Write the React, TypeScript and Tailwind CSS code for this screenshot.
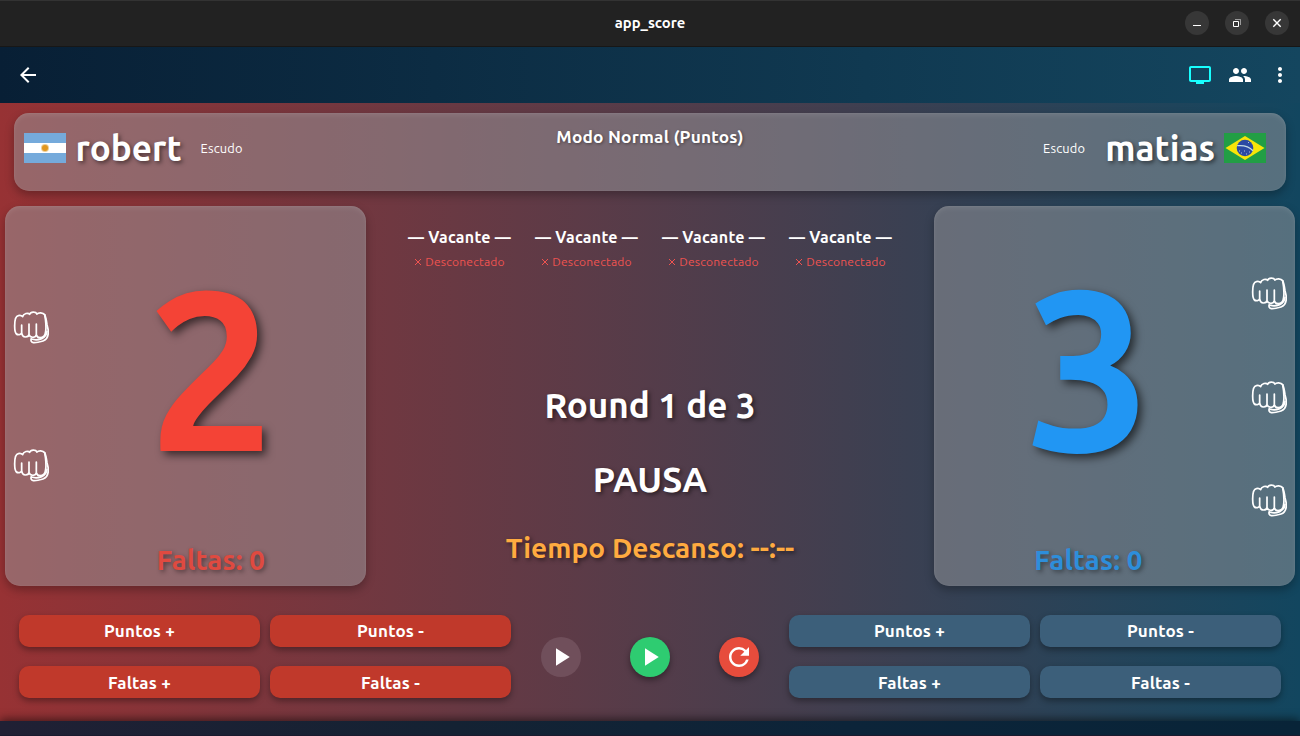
import type { ReactNode } from "react";
import { MdArrowBack, MdMoreVert, MdPeople, MdPlayArrow, MdRefresh, MdTv } from "react-icons/md";

function Fist() {
  return (
    <svg viewBox="36 27 108 108" className="size-9 shrink-0" fill="none" stroke="white" strokeWidth="5.2" strokeLinecap="round" strokeLinejoin="round">
      <path d="M48 103C43 101 41 92 41 78C41 62 44 48 52 47C58 45 62 47 65 50C67 40 82 37 86 43C89 34 104 34 108 42C112 37 126 37 131 44C134 50 136 60 138 74C141 88 143 92 142 98C141 113 136 120 126 123C116 126 104 129 97 128C90 126 89 121 91 117" />
      <path d="M62 75V98M48 103C54 105 60 104 62 98C63 106 67 111 73 111C79 111 84 109 84 103V72M84 103C86 114 104 115 106 104V72M106 104C108 112 112 113 117 113C128 113 133 105 134 94C136 80 134 60 131 44" />
      <path d="M91 117C100 120 112 120 122 116C132 111 137 104 138 94" />
    </svg>
  );
}

function ArgentinaFlag() {
  return (
    <svg viewBox="0 0 42 30" className="h-[30px] w-[42px]">
      <rect width="42" height="30" fill="#75aadb" />
      <rect y="10" width="42" height="10" fill="#fff" />
      <circle cx="21" cy="15" r="4" fill="#e9c27a" opacity=".8" />
      <circle cx="21" cy="15" r="3" fill="#e0961f" />
    </svg>
  );
}

function BrazilFlag() {
  return (
    <svg viewBox="0 0 42 30" className="h-[30px] w-[42px]">
      <rect width="42" height="30" fill="#229e45" />
      <path d="M1.5 15L21 3L40.5 15L21 27Z" fill="#f8e509" />
      <circle cx="21" cy="15" r="8.3" fill="#2b49a3" />
      <path d="M13.2 12.7C19.5 12 25.5 14 29 17.8" fill="none" stroke="#c5dce4" strokeWidth="1.3" />
      <path d="M15 18h1M17 20h1M20 18h1M22 21h1M25 19h1M24 9.5h1" stroke="#aebfe0" strokeWidth="1" />
    </svg>
  );
}

function WindowButton({ children }: { children: ReactNode }) {
  return (
    <div className="flex size-6 items-center justify-center rounded-full bg-[#373737]">
      <svg viewBox="0 0 24 24" className="size-6" fill="none" stroke="white">
        {children}
      </svg>
    </div>
  );
}

const glass =
  "bg-[#99999d]/50 rounded-[15px] shadow-[0_4px_10px_rgba(0,0,0,0.28),inset_0_3px_6px_-2px_rgba(255,255,255,0.12),inset_0_0_2px_rgba(255,255,255,0.1)]";

const bigShadow = "[text-shadow:2px_2px_4px_rgba(0,0,0,0.5)]";

function Seat() {
  return (
    <div className="flex w-[127px] flex-col items-center whitespace-nowrap">
      <p className="h-6 text-base leading-6 font-bold tracking-[0.25px]">— Vacante —</p>
      <p className="mt-[3px] flex h-[20px] items-center text-[12px] tracking-[0.23px] text-[#ef5350]">
        <svg viewBox="0 0 8 8" className="mr-[3px] size-2" stroke="currentColor" strokeWidth="1">
          <path d="M1 1L7 7M7 1L1 7" />
        </svg>
        Desconectado
      </p>
    </div>
  );
}

function ActionButton({ label, blue, low }: { label: string; blue?: boolean; low?: boolean }) {
  return (
    <button
      className={`flex h-8 w-[241px] items-center justify-center rounded-[10px] text-[17px] leading-8 font-bold tracking-[0.2px] shadow-[0_3px_6px_rgba(0,0,0,0.35)] ${
        blue ? "bg-[#3c5f7a]" : "bg-[#c0392b]"
      } ${low ? "pt-[2px]" : ""}`}
    >
      {label}
    </button>
  );
}

function ActionGrid({ blue }: { blue?: boolean }) {
  return (
    <div className="grid grid-cols-[241px_241px] gap-x-[10px] gap-y-[19px]">
      <ActionButton blue={blue} label="Puntos +" />
      <ActionButton blue={blue} label="Puntos -" />
      <ActionButton blue={blue} low label="Faltas +" />
      <ActionButton blue={blue} low label="Faltas -" />
    </div>
  );
}

function ScoreCard({ score, blue, fists }: { score: number; blue?: boolean; fists: number }) {
  return (
    <section className={`flex h-[380px] w-[361px] ${blue ? "flex-row-reverse" : ""} ${glass}`}>
      <div className={`flex shrink-0 flex-col items-center justify-evenly ${blue ? "w-[52px] pt-px" : "w-[51px]"}`}>
        {Array.from({ length: fists }, (_, i) => (
          <Fist key={i} />
        ))}
      </div>
      <div className={`flex flex-col items-center ${blue ? "w-[309px] text-[#2196f3]" : "w-[310px] text-[#f44336]"}`}>
        <p className="mt-[48px] h-[226px] text-[226px] leading-[226px] font-bold [text-shadow:4px_4px_8px_rgba(0,0,0,0.6)]">{score}</p>
        <p className={`mt-[60px] text-[27.6px] leading-10 font-bold tracking-[0.2px] opacity-80 ${bigShadow}`}>Faltas: 0</p>
      </div>
    </section>
  );
}

export default function App() {
  return (
    <div className="flex h-[736px] w-[1300px] flex-col overflow-hidden bg-[linear-gradient(90deg,#973234,#12465f)] font-['Ubuntu','Noto_Sans',sans-serif] text-white">
      <header className="grid h-[47px] shrink-0 grid-cols-[1fr_auto_1fr] items-center border-t border-b border-t-[#333] border-b-[#171717] bg-[#222] px-[11px] pb-px">
        <span />
        <h1 className="text-[14.8px] leading-5 font-bold">app_score</h1>
        <div className="flex justify-end gap-4">
          <WindowButton>
            <path d="M8 14.5H16" />
          </WindowButton>
          <WindowButton>
            <path d="M8.5 10.5H13.5V15.5H8.5Z" />
            <path d="M10 8.5H15.5V14" opacity=".5" />
          </WindowButton>
          <WindowButton>
            <path d="M8.3 8.3L15.7 15.7M15.7 8.3L8.3 15.7" strokeWidth="1.4" />
          </WindowButton>
        </div>
      </header>

      <nav className="flex h-14 shrink-0 items-center justify-between bg-[linear-gradient(90deg,#081f35,#14465f)] pr-2 pl-4">
        <MdArrowBack size={24} />
        <div className="flex items-center gap-4">
          <MdTv size={24} className="text-[#18ffff]" />
          <MdPeople size={24} />
          <MdMoreVert size={24} />
        </div>
      </nav>

      <main className="flex h-[618px] shrink-0 flex-col">
        <section className={`mx-[14px] mt-[10px] grid h-[78px] shrink-0 grid-cols-[1fr_auto_1fr] pt-[15px] pr-5 pl-[10px] ${glass}`}>
          <div className="flex h-10 items-center">
            <ArgentinaFlag />
            <span className={`ml-[9.5px] text-[35.1px] leading-10 font-bold ${bigShadow}`}>robert</span>
            <span className="ml-[19px] pt-[2px] text-[12.8px] tracking-[0.2px]">Escudo</span>
          </div>
          <h2 className="mt-[-3px] pl-[10px] text-[17.3px] leading-6 font-bold tracking-[0.2px] [text-shadow:1px_1px_3px_rgba(0,0,0,0.4)]">Modo Normal (Puntos)</h2>
          <div className="flex h-10 items-center justify-end">
            <span className="mr-5 pt-[2px] text-[12.8px] tracking-[0.2px]">Escudo</span>
            <span className={`mr-[9px] text-[35.1px] leading-10 font-bold ${bigShadow}`}>matias</span>
            <BrazilFlag />
          </div>
        </section>

        <div className="mt-[15px] flex justify-between px-[5px]">
          <ScoreCard score={2} fists={2} />
          <section className="flex w-[508px] flex-col items-center pt-[19px] whitespace-nowrap">
            <div className="flex">
              <Seat />
              <Seat />
              <Seat />
              <Seat />
            </div>
            <p className={`mt-[108px] text-[35.1px] leading-[50px] font-bold ${bigShadow}`}>Round 1 de 3</p>
            <p className={`mt-[24px] text-[35.4px] leading-[50px] font-bold ${bigShadow}`}>PAUSA</p>
            <p className={`mt-[24px] text-[28px] leading-10 font-bold tracking-[0.05px] text-[#ffab40] ${bigShadow}`}>Tiempo Descanso: --:--</p>
          </section>
          <ScoreCard score={3} blue fists={3} />
        </div>

        <div className="mt-[29px] flex items-center justify-between px-[19px]">
          <ActionGrid />
          <div className="flex gap-[49px]">
            <button className="flex size-10 items-center justify-center rounded-full bg-[#704f5b]">
              <MdPlayArrow size={30} />
            </button>
            <button className="flex size-10 items-center justify-center rounded-full bg-[#2ecc71] shadow-[0_3px_6px_rgba(0,0,0,0.4)]">
              <MdPlayArrow size={30} />
            </button>
            <button className="flex size-10 items-center justify-center rounded-full bg-[#e74c3c] shadow-[0_3px_6px_rgba(0,0,0,0.4)]">
              <MdRefresh size={30} />
            </button>
          </div>
          <ActionGrid blue />
        </div>
      </main>

      <footer className="h-[15px] shrink-0 border-b border-[#1a1a2e] bg-[linear-gradient(90deg,#202034,#142233_35%,#0c2439_65%,#082438)] shadow-[0_-2px_10px_rgba(0,0,0,0.55)]" />
    </div>
  );
}
